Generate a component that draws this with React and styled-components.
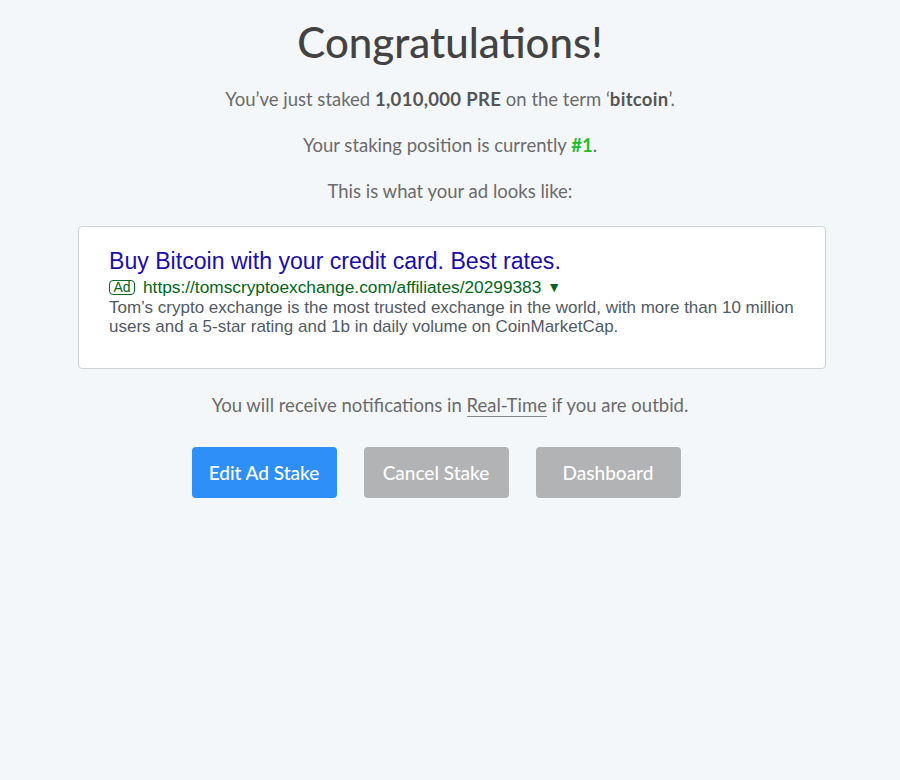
import React from "react";
import styled, { createGlobalStyle } from "styled-components";

const GlobalStyle = createGlobalStyle`
  html, body {
    margin: 0;
    padding: 0;
    background: #f4f7fa;
  }
  body {
    font-family: Lato, "Open Sans", sans-serif;
  }
`;

export default function App() {
  return (
    <>
      <GlobalStyle />
      <Page>
        <Title>Congratulations!</Title>
        <Line>
          You’ve just staked <Strong>1,010,000 PRE</Strong> on the term ‘<Strong>bitcoin</Strong>’.
        </Line>
        <Line>
          Your staking position is currently <Rank>#1</Rank>.
        </Line>
        <Line>This is what your ad looks like:</Line>

        <AdCard>
          <AdTitle>Buy Bitcoin with your credit card. Best rates.</AdTitle>
          <AdUrlRow>
            <AdBadge>Ad</AdBadge>
            <span>https://tomscryptoexchange.com/affiliates/20299383</span>
            <Caret>▼</Caret>
          </AdUrlRow>
          <AdDesc>
            Tom’s crypto exchange is the most trusted exchange in the world, with more than 10 million
            users and a 5-star rating and 1b in daily volume on CoinMarketCap.
          </AdDesc>
        </AdCard>

        <Notice>
          You will receive notifications in <Dotted>Real-Time</Dotted> if you are outbid.
        </Notice>

        <Buttons>
          <Button $primary>Edit Ad Stake</Button>
          <Button>Cancel Stake</Button>
          <Button>Dashboard</Button>
        </Buttons>
      </Page>
    </>
  );
}

const Page = styled.div`
  min-height: 780px;
  display: flex;
  flex-direction: column;
  align-items: center;
  padding-top: 16px;
  box-sizing: border-box;
  color: #666;
`;

const Title = styled.h1`
  margin: 0 0 19px;
  font-size: 42px;
  font-weight: 500;
  color: #434343;
  line-height: 52px;
`;

const Line = styled.p`
  margin: 0 0 22px;
  font-size: 18.5px;
  line-height: 24px;
  color: #6b6b6b;
`;

const Strong = styled.b`
  font-weight: 700;
  color: #555;
  letter-spacing: 0.3px;
`;

const Rank = styled.b`
  font-weight: 700;
  color: #1fbd2a;
`;

const AdCard = styled.div`
  width: 748px;
  box-sizing: border-box;
  margin: 1px 0 0 4px;
  padding: 19px 30px 32px;
  background: #fff;
  border: 1px solid #cfd4d9;
  border-radius: 4px;
  font-family: "Liberation Sans", Arial, sans-serif;
`;

const AdTitle = styled.div`
  font-size: 23.1px;
  line-height: 30px;
  color: #1a0dab;
`;

const AdUrlRow = styled.div`
  display: flex;
  align-items: center;
  gap: 8px;
  font-size: 17.3px;
  line-height: 22px;
  color: #006621;
`;

const AdBadge = styled.span`
  box-sizing: border-box;
  height: 15px;
  width: 26px;
  display: flex;
  align-items: center;
  justify-content: center;
  border: 1px solid #006621;
  border-radius: 4px;
  font-size: 14px;
`;

const Caret = styled.span`
  font-size: 14px;
  margin-left: -2px;
`;

const AdDesc = styled.div`
  font-size: 17px;
  line-height: 19px;
  color: #505a64;
`;

const Notice = styled.p`
  margin: 24px 0 30px;
  font-size: 18.5px;
  line-height: 24px;
  color: #6b6b6b;
`;

const Dotted = styled.span`
  border-bottom: 1px solid #888;
`;

const Buttons = styled.div`
  display: flex;
  gap: 27px;
  margin-right: 28px;
`;

const Button = styled.button`
  width: 145px;
  height: 51px;
  border: none;
  border-radius: 4px;
  background: ${(p) => (p.$primary ? "#2e8ff8" : "#b2b3b5")};
  color: #fff;
  font-family: Lato, "Open Sans", sans-serif;
  font-size: 19px;
  font-weight: 500;
  cursor: pointer;
`;
